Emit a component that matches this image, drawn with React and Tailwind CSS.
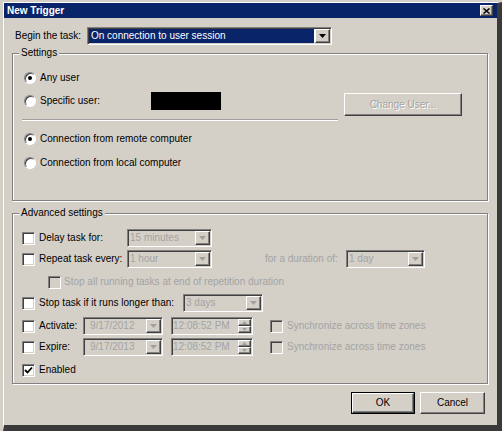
import React from "react";

const sunken =
  "border border-t-[#808080] border-l-[#808080] border-r-white border-b-white shadow-[inset_1px_1px_0_#404040,inset_-1px_-1px_0_#d4d0c8]";
const raised =
  "border border-t-white border-l-white border-r-[#404040] border-b-[#404040] shadow-[inset_-1px_-1px_0_#808080]";
const grayText = "text-[#a3a3a3]";

function Arrow({ up, color = "#000" }) {
  return (
    <svg width="7" height="4" viewBox="0 0 7 4">
      <polygon points={up ? "3.5,0 7,4 0,4" : "0,0 7,0 3.5,4"} fill={color} />
    </svg>
  );
}

function DropButton({ disabled }) {
  return (
    <div className={`${raised} w-[15px] h-[14px] bg-[#d4d0c8] flex items-center justify-center shrink-0`}>
      <Arrow color={disabled ? "#a0a0a0" : "#000"} />
    </div>
  );
}

function Combo({ className, value, indent = "pl-[1px]" }) {
  return (
    <div className={`${sunken} ${className} h-[18px] bg-[#d4d0c8] flex items-center p-[1px]`}>
      <span className={`flex-1 ${indent} ${grayText} leading-[14px]`}>{value}</span>
      <DropButton disabled />
    </div>
  );
}

function TimeField({ value }) {
  return (
    <div className={`${sunken} w-[82px] h-[18px] bg-[#d4d0c8] flex items-center p-[1px]`}>
      <span className={`flex-1 ${grayText}`}>{value}</span>
      <div className="flex flex-col shrink-0">
        <div className={`${raised} w-[13px] h-[7px] bg-[#d4d0c8] flex items-center justify-center`}>
          <svg width="5" height="3" viewBox="0 0 5 3">
            <polygon points="2.5,0 5,3 0,3" fill="#a0a0a0" />
          </svg>
        </div>
        <div className={`${raised} w-[13px] h-[7px] bg-[#d4d0c8] flex items-center justify-center`}>
          <svg width="5" height="3" viewBox="0 0 5 3">
            <polygon points="0,0 5,0 2.5,3" fill="#a0a0a0" />
          </svg>
        </div>
      </div>
    </div>
  );
}

function Checkbox({ checked, disabled }) {
  return (
    <div
      className={`${sunken} w-[13px] h-[13px] shrink-0 flex items-center justify-center ${
        disabled ? "bg-[#d4d0c8]" : "bg-white"
      }`}
    >
      {checked && (
        <svg width="9" height="9" viewBox="0 0 9 9">
          <path d="M1 4 L3.5 6.5 L8 1.5" stroke="#000" strokeWidth="1.8" fill="none" />
        </svg>
      )}
    </div>
  );
}

function Radio({ checked }) {
  return (
    <div className="w-[12px] h-[12px] shrink-0 rounded-full bg-white border border-t-[#808080] border-l-[#808080] border-r-white border-b-white shadow-[inset_1px_1px_0_#404040] flex items-center justify-center">
      {checked && <div className="w-[4px] h-[4px] rounded-full bg-black" />}
    </div>
  );
}

function GroupBox({ title, className, children }) {
  return (
    <div
      className={`relative ml-[8px] w-[476px] border border-[#808080] shadow-[inset_1px_1px_0_#fff,1px_1px_0_#fff] ${className}`}
    >
      <span className="absolute left-[6px] -top-[7px] px-[2px] bg-[#d4d0c8] leading-[12px]">
        {title}
      </span>
      {children}
    </div>
  );
}

export default function App() {
  return (
    <div className="w-[502px] h-[431px] bg-[#d4d0c8] overflow-hidden font-['Liberation_Sans',Arial,sans-serif] text-[10px] leading-[12px] text-black">
      <div className="ml-[3px] mt-[2px] w-[499px] h-[429px] border-l border-t border-l-white border-t-white border-r-[5px] border-b-[6px] border-r-[#3a3a3a] border-b-[#3a3a3a] flex flex-col">
        {/* title bar */}
        <div className="h-[15px] bg-[#0a246a] flex items-center pl-[3px] pr-[4px] shrink-0">
          <span className="text-white font-bold text-[10px] leading-[15px]">New Trigger</span>
          <div className={`${raised} ml-auto w-[13px] h-[11px] bg-[#d4d0c8] flex items-center justify-center`}>
            <svg width="7" height="6" viewBox="0 0 7 6">
              <path d="M0.5 0.5 L6.5 5.5 M6.5 0.5 L0.5 5.5" stroke="#000" strokeWidth="1.5" />
            </svg>
          </div>
        </div>

        {/* begin the task */}
        <div className="mt-[9px] h-[18px] flex items-center pl-[11px]">
          <span className="w-[72px]">Begin the task:</span>
          <div className={`${sunken} w-[245px] h-[18px] bg-white flex items-center p-[1px]`}>
            <span className="flex-1 h-[14px] bg-[#0a246a] text-white pl-[2px] leading-[14px] mr-[1px]">
              On connection to user session
            </span>
            <DropButton />
          </div>
        </div>

        {/* settings */}
        <GroupBox title="Settings" className="mt-[8px] h-[148px]">
          <div className="mt-[16px] h-[16px] flex items-center pl-[11px]">
            <Radio checked />
            <span className="ml-[4px]">Any user</span>
          </div>
          <div className="mt-[6px] flex">
            <div className="pl-[9px] w-[325px] flex flex-col">
              <div className="h-[18px] flex items-center">
                <div className="ml-[2px]">
                  <Radio />
                </div>
                <span className="ml-[4px] w-[111px]">Specific user:</span>
                <div className="w-[70px] h-[18px] bg-black" />
              </div>
              <div className="mt-[9px] w-[316px] h-[2px] border-t border-t-[#a0a0a0] border-b border-b-white" />
            </div>
            <div
              className={`${raised} ml-[6px] mt-[1px] w-[118px] h-[23px] bg-[#d4d0c8] flex items-center justify-center ${grayText} [text-shadow:1px_1px_0_#fff]`}
            >
              Change User...
            </div>
          </div>
          <div className="mt-[10px] h-[16px] flex items-center pl-[11px]">
            <Radio checked />
            <span className="ml-[4px]">Connection from remote computer</span>
          </div>
          <div className="mt-[8px] h-[16px] flex items-center pl-[11px]">
            <Radio />
            <span className="ml-[4px]">Connection from local computer</span>
          </div>
        </GroupBox>

        {/* advanced settings */}
        <GroupBox title="Advanced settings" className="mt-[12px] h-[171px]">
          <div className="mt-[15px] h-[18px] flex items-center pl-[9px]">
            <Checkbox />
            <span className="ml-[4px] w-[88px]">Delay task for:</span>
            <Combo className="w-[85px]" value="15 minutes" />
          </div>
          <div className="mt-[3px] h-[18px] flex items-center pl-[9px]">
            <Checkbox />
            <span className="ml-[4px] w-[88px]">Repeat task every:</span>
            <Combo className="w-[85px]" value="1 hour" />
            <span className={`ml-[53px] w-[81px] ${grayText}`}>for a duration of:</span>
            <Combo className="w-[79px]" value="1 day" />
          </div>
          <div className="mt-[5px] h-[18px] flex items-center pl-[35px]">
            <Checkbox disabled />
            <span className={`ml-[3px] ${grayText}`}>
              Stop all running tasks at end of repetition duration
            </span>
          </div>
          <div className="mt-[3px] h-[18px] flex items-center pl-[9px]">
            <Checkbox />
            <span className="ml-[4px] w-[144px]">Stop task if it runs longer than:</span>
            <Combo className="w-[80px]" value="3 days" />
          </div>
          <div className="mt-[5px] h-[18px] flex items-center pl-[9px]">
            <Checkbox />
            <span className="ml-[4px] w-[44px]">Activate:</span>
            <Combo className="w-[80px]" value="9/17/2012" indent="pl-[5px]" />
            <div className="ml-[8px]">
              <TimeField value="12:08:52 PM" />
            </div>
            <div className="ml-[17px]">
              <Checkbox disabled />
            </div>
            <span className={`ml-[4px] ${grayText}`}>Synchronize across time zones</span>
          </div>
          <div className="mt-[3px] h-[18px] flex items-center pl-[9px]">
            <Checkbox />
            <span className="ml-[4px] w-[44px]">Expire:</span>
            <Combo className="w-[80px]" value="9/17/2013" indent="pl-[5px]" />
            <div className="ml-[8px]">
              <TimeField value="12:08:52 PM" />
            </div>
            <div className="ml-[17px]">
              <Checkbox disabled />
            </div>
            <span className={`ml-[4px] ${grayText}`}>Synchronize across time zones</span>
          </div>
          <div className="mt-[5px] h-[18px] flex items-center pl-[9px]">
            <Checkbox checked />
            <span className="ml-[4px]">Enabled</span>
          </div>
        </GroupBox>

        {/* buttons */}
        <div className="mt-[8px] flex pl-[347px] gap-[5px]">
          <div className="w-[64px] h-[22px] border border-black">
            <div className={`${raised} w-full h-full bg-[#d4d0c8] flex items-center justify-center`}>
              OK
            </div>
          </div>
          <div className={`${raised} w-[65px] h-[22px] bg-[#d4d0c8] flex items-center justify-center`}>
            Cancel
          </div>
        </div>
      </div>
    </div>
  );
}
